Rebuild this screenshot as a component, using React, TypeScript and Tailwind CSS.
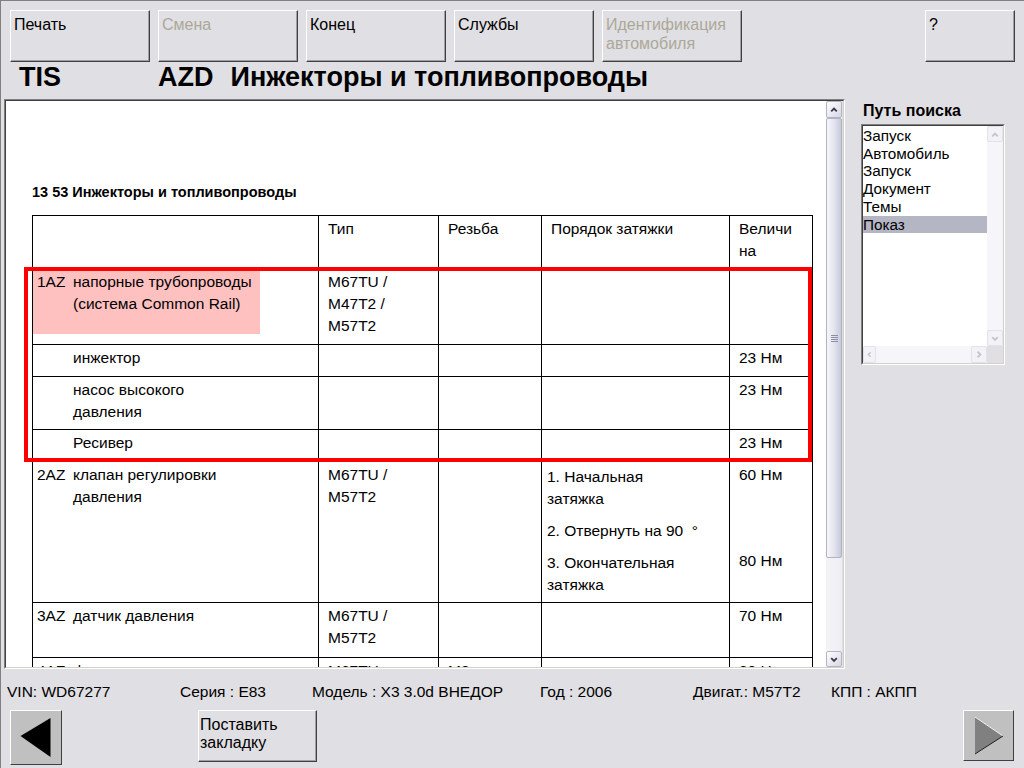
import React from "react";

const FONT = "font-['Liberation_Sans',Arial,sans-serif]";

function TopBtn({ children, disabled, className }: { children: React.ReactNode; disabled?: boolean; className: string }) {
  return (
    <div
      className={`${className} h-[52px] shrink-0 bg-[#e0dfe3] border border-t-white border-l-white border-r-[#404040] border-b-[#404040] shadow-[inset_-1px_-1px_0_#a0a0a0] pl-[3px] pt-[4px] text-[16px] leading-[19px] ${
        disabled ? "text-[#aca899]" : "text-black"
      }`}
    >
      {children}
    </div>
  );
}

function Chevron({ dir, color }: { dir: "up" | "down" | "left" | "right"; color: string }) {
  const d =
    dir === "up"
      ? "M4.5 9.5 L7.5 6.5 L10.5 9.5"
      : dir === "down"
      ? "M4.5 6 L7.5 9 L10.5 6"
      : dir === "left"
      ? "M9 4.5 L6 7.5 L9 10.5"
      : "M6 4.5 L9 7.5 L6 10.5";
  return (
    <svg width="15" height="15" viewBox="0 0 15 15">
      <path d={d} stroke={color} strokeWidth="2" fill="none" />
    </svg>
  );
}

const td = "border border-black align-top pt-[2px] pl-[9px]";
const td1 = "border border-black align-top pt-[2px] pl-[4px]";

function Desc({ code, children }: { code?: string; children: React.ReactNode }) {
  return (
    <div className="flex">
      <span className="w-[36px] shrink-0">{code}</span>
      <span>{children}</span>
    </div>
  );
}

export default function App() {
  return (
    <div
      className={`w-[1024px] h-[768px] bg-[#e0dfe3] border-l border-t border-[#808080] flex flex-col overflow-hidden ${FONT} text-black`}
    >
      {/* Top buttons */}
      <div className="h-[61px] shrink-0 flex items-start pt-[9px] pl-[9px] pr-[9px] gap-[8px]">
        <TopBtn className="w-[140px]">Печать</TopBtn>
        <TopBtn className="w-[140px]" disabled>
          Смена
        </TopBtn>
        <TopBtn className="w-[140px]">Конец</TopBtn>
        <TopBtn className="w-[140px]">Службы</TopBtn>
        <TopBtn className="w-[140px]" disabled>
          Идентификация
          <br />
          автомобиля
        </TopBtn>
        <TopBtn className="w-[90px] ml-auto">?</TopBtn>
      </div>

      {/* Title */}
      <div className="h-[37px] shrink-0 flex items-start pt-[0px] text-[27px] leading-[31px] font-bold">
        <span className="pl-[18px] w-[157px]">TIS</span>
        <span>AZD</span>
        <span className="ml-[17px]">Инжекторы и топливопроводы</span>
      </div>

      {/* Main */}
      <div className="h-[570px] shrink-0 flex">
        <div className="ml-[3px] w-[841px] h-full border border-t-[#808080] border-l-[#808080] border-b-white border-r-white">
          <div className="w-full h-full border border-t-[#404040] border-l-[#404040] border-b-[#d4d0c8] border-r-[#d4d0c8] flex">
            {/* white content */}
            <div className="w-[820px] h-full bg-white overflow-hidden">
              <div className="pl-[26px] pt-[82px] text-[15.5px] leading-[22px]">
                <div className="text-[14.5px] leading-[18px] font-bold">13 53 Инжекторы и топливопроводы</div>
                <div className="relative mt-[14px] w-[780px]">
                  <table className="border-collapse table-fixed w-[780px]">
                    <colgroup>
                      <col className="w-[286px]" />
                      <col className="w-[120px]" />
                      <col className="w-[103px]" />
                      <col className="w-[188px]" />
                      <col className="w-[83px]" />
                    </colgroup>
                    <tbody>
                      <tr className="h-[52px]">
                        <td className={td1}></td>
                        <td className={td}>Тип</td>
                        <td className={td}>Резьба</td>
                        <td className={td}>Порядок затяжки</td>
                        <td className={td}>
                          Величи
                          <br />
                          на
                        </td>
                      </tr>
                      <tr className="h-[77px]">
                        <td className="border border-black align-top p-0">
                          <div className="bg-[#ffc0c0] w-[227px] h-[66px] pl-[4px] pt-[3px]">
                            <Desc code="1AZ">
                              напорные трубопроводы
                              <br />
                              (система Common Rail)
                            </Desc>
                          </div>
                        </td>
                        <td className="border border-black align-top pt-[3px] pl-[9px]">
                          M67TU /
                          <br />
                          M47T2 /
                          <br />
                          M57T2
                        </td>
                        <td className={td}></td>
                        <td className={td}></td>
                        <td className={td}></td>
                      </tr>
                      <tr className="h-[32px]">
                        <td className={td1}>
                          <Desc>инжектор</Desc>
                        </td>
                        <td className={td}></td>
                        <td className={td}></td>
                        <td className={td}></td>
                        <td className={td}>23 Нм</td>
                      </tr>
                      <tr className="h-[53px]">
                        <td className={td1}>
                          <Desc>
                            насос высокого
                            <br />
                            давления
                          </Desc>
                        </td>
                        <td className={td}></td>
                        <td className={td}></td>
                        <td className={td}></td>
                        <td className={td}>23 Нм</td>
                      </tr>
                      <tr className="h-[32px]">
                        <td className={td1}>
                          <Desc>Ресивер</Desc>
                        </td>
                        <td className={td}></td>
                        <td className={td}></td>
                        <td className={td}></td>
                        <td className={td}>23 Нм</td>
                      </tr>
                      <tr className="h-[141px]">
                        <td className={td1}>
                          <Desc code="2AZ">
                            клапан регулировки
                            <br />
                            давления
                          </Desc>
                        </td>
                        <td className={td}>
                          M67TU /
                          <br />
                          M57T2
                        </td>
                        <td className={td}></td>
                        <td className="border border-black align-top pt-[4px] pl-[5px]">
                          <div className="mb-[10px]">
                            1. Начальная
                            <br />
                            затяжка
                          </div>
                          <div className="mb-[10px] whitespace-pre">2. Отвернуть на 90  °</div>
                          <div>
                            3. Окончательная
                            <br />
                            затяжка
                          </div>
                        </td>
                        <td className={td}>
                          <div>60 Нм</div>
                          <div className="mt-[64px]">80 Нм</div>
                        </td>
                      </tr>
                      <tr className="h-[55px]">
                        <td className={td1}>
                          <Desc code="3AZ">датчик давления</Desc>
                        </td>
                        <td className={td}>
                          M67TU /
                          <br />
                          M57T2
                        </td>
                        <td className={td}></td>
                        <td className={td}></td>
                        <td className={td}>70 Нм</td>
                      </tr>
                      <tr className="h-[55px]">
                        <td className={td1}>
                          <Desc code="4AZ">форсунка к головке</Desc>
                        </td>
                        <td className={td}>M67TU</td>
                        <td className={td}>M8</td>
                        <td className={td}></td>
                        <td className={td}>30 Нм</td>
                      </tr>
                    </tbody>
                  </table>
                  <div className="absolute left-[-8px] top-[52px] w-[788px] h-[195px] border-4 border-[#ff0000] pointer-events-none" />
                </div>
              </div>
            </div>
            {/* vertical scrollbar */}
            <div className="w-[16px] h-full flex flex-col bg-gradient-to-r from-[#f3f3f7] to-[#eeeef4]">
              <div className="h-[17px] shrink-0 border border-[#b4b4c6] rounded-[2px] bg-gradient-to-br from-white to-[#d6d7e4] flex items-center justify-center">
                <Chevron dir="up" color="#3c3c48" />
              </div>
              <div className="h-[440px] shrink-0 border border-[#b0b2c6] rounded-[2px] bg-gradient-to-r from-[#f6f6fa] via-[#e3e4ee] to-[#c8cadb] flex flex-col items-center justify-center gap-[1px]">
                <div className="w-[7px] h-[1px] bg-[#8c8ea4]" />
                <div className="w-[7px] h-[1px] bg-[#8c8ea4]" />
                <div className="w-[7px] h-[1px] bg-[#8c8ea4]" />
                <div className="w-[7px] h-[1px] bg-[#8c8ea4]" />
              </div>
              <div className="flex-1" />
              <div className="h-[16px] shrink-0 border border-[#b4b4c6] rounded-[2px] bg-gradient-to-br from-white to-[#d6d7e4] flex items-center justify-center">
                <Chevron dir="down" color="#3c3c48" />
              </div>
            </div>
          </div>
        </div>

        {/* Side panel */}
        <div className="ml-[16px] w-[144px] flex flex-col">
          <div className="h-[25px] pt-[2px] pl-[2px] text-[16px] leading-[19px] font-bold">Путь поиска</div>
          <div className="w-[144px] h-[241px] border border-t-[#808080] border-l-[#808080] border-b-white border-r-white">
            <div className="w-full h-full border border-t-[#404040] border-l-[#404040] border-b-[#d4d0c8] border-r-[#d4d0c8] flex flex-col bg-white">
              <div className="h-[223px] flex">
                <div className="flex-1 pt-[1px] text-[15.3px] leading-[17.7px]">
                  <div>Запуск</div>
                  <div>Автомобиль</div>
                  <div>Запуск</div>
                  <div>Документ</div>
                  <div>Темы</div>
                  <div className="bg-[#b5b6c4]">Показ</div>
                </div>
                <div className="w-[16px] h-full flex flex-col bg-[#f6f6fa]">
                  <div className="h-[16px] border border-[#e2e2ea] rounded-[2px] bg-[#f3f3f7] flex items-center justify-center">
                    <Chevron dir="up" color="#c4c4cf" />
                  </div>
                  <div className="flex-1" />
                  <div className="h-[16px] border border-[#e2e2ea] rounded-[2px] bg-[#f3f3f7] flex items-center justify-center">
                    <Chevron dir="down" color="#c4c4cf" />
                  </div>
                </div>
              </div>
              <div className="flex-1 flex">
                <div className="flex-1 flex bg-[#f6f6fa]">
                  <div className="w-[13px] border border-[#e2e2ea] rounded-[2px] bg-[#f3f3f7] flex items-center justify-center">
                    <Chevron dir="left" color="#c4c4cf" />
                  </div>
                  <div className="flex-1" />
                  <div className="w-[16px] border border-[#e2e2ea] rounded-[2px] bg-[#f3f3f7] flex items-center justify-center">
                    <Chevron dir="right" color="#c4c4cf" />
                  </div>
                </div>
                <div className="w-[16px] bg-[#e0dfe3]" />
              </div>
            </div>
          </div>
        </div>
      </div>

      {/* Status */}
      <div className="h-[41px] shrink-0 flex items-start pt-[14px] pl-[6px] text-[15.5px] leading-[18px]">
        <span className="w-[173px]">VIN: WD67277</span>
        <span className="w-[132px]">Серия : E83</span>
        <span className="w-[228px]">Модель : X3 3.0d ВНЕДОР</span>
        <span className="w-[153px]">Год : 2006</span>
        <span className="w-[138px]">Двигат.: M57T2</span>
        <span>КПП : АКПП</span>
      </div>

      {/* Bottom buttons */}
      <div className="flex-1 flex items-start">
        <div className="ml-[9px] w-[52px] h-[55px] bg-[#c0c0c0] border border-t-white border-l-white border-r-[#404040] border-b-[#404040]">
          <svg width="50" height="53" viewBox="0 0 50 53">
            <polygon points="9.5,25 39.5,7 39.5,46" fill="#000" />
          </svg>
        </div>
        <div className="ml-[136px] w-[119px] h-[52px] bg-[#e0dfe3] border border-t-white border-l-white border-r-[#404040] border-b-[#404040] shadow-[inset_-1px_-1px_0_#a0a0a0] pl-[1px] pt-[5px] text-[16px] leading-[18px]">
          Поставить
          <br />
          закладку
        </div>
        <div className="ml-auto mr-[10px] w-[51px] h-[51px] bg-[#c0c0c0] border border-t-white border-l-white border-r-[#404040] border-b-[#404040]">
          <svg width="49" height="49" viewBox="0 0 49 49">
            <polygon points="11,6 39,25 11,43" fill="#808080" />
            <path d="M11 6 L39 25" stroke="#f0f0f0" strokeWidth="1" />
            <path d="M39 25 L11 43" stroke="#202020" strokeWidth="1" />
          </svg>
        </div>
      </div>
    </div>
  );
}
